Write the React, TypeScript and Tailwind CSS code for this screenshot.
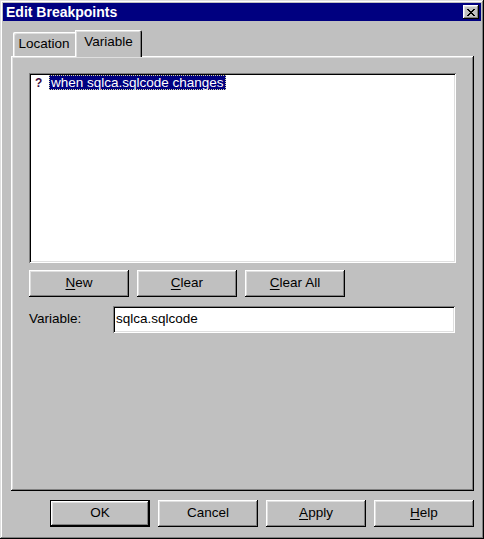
import type { ReactNode } from 'react';

// classic 3D bevels
const raised =
    'shadow-[inset_-1px_-1px_0_#000000,inset_1px_1px_0_#ffffff,inset_-2px_-2px_0_#808080,inset_2px_2px_0_#dfdfdf]';
const sunken =
    'shadow-[inset_1px_1px_0_#808080,inset_-1px_-1px_0_#ffffff,inset_2px_2px_0_#000000,inset_-2px_-2px_0_#dfdfdf]';

// pixel X for the close box
const closeCells = [
    [0, 0], [1, 0], [6, 0], [7, 0],
    [1, 1], [2, 1], [5, 1], [6, 1],
    [2, 2], [3, 2], [4, 2], [5, 2],
    [3, 3], [4, 3],
    [2, 4], [3, 4], [4, 4], [5, 4],
    [1, 5], [2, 5], [5, 5], [6, 5],
    [0, 6], [1, 6], [6, 6], [7, 6],
];

function CloseGlyph() {
    return (
        <svg width="8" height="7" viewBox="0 0 8 7" shapeRendering="crispEdges">
            {closeCells.map(([x, y]) => (
                <rect key={`${x}-${y}`} x={x} y={y} width="1" height="1" fill="#000" />
            ))}
        </svg>
    );
}

function Button({ children, isDefault }: { children: ReactNode; isDefault?: boolean }) {
    if (isDefault) {
        return (
            <div className="w-[100px] h-[27px] border border-black bg-[#c0c0c0]">
                <div className={`w-full h-full flex items-center justify-center ${raised}`}>{children}</div>
            </div>
        );
    }
    return (
        <div className={`w-[100px] h-[27px] flex items-center justify-center bg-[#c0c0c0] ${raised}`}>
            {children}
        </div>
    );
}

function Key({ children }: { children: ReactNode }) {
    return <span className="underline underline-offset-[2px]">{children}</span>;
}

export default function App() {
    return (
        <div
            className="w-[484px] h-[539px] p-[3px] bg-[#c0c0c0] flex flex-col text-black text-[13.5px] shadow-[inset_-1px_-1px_0_#000000,inset_1px_1px_0_#dfdfdf,inset_-2px_-2px_0_#808080,inset_2px_2px_0_#ffffff]"
            style={{ fontFamily: '"Liberation Sans", Arial, sans-serif' }}
        >
            {/* Title bar */}
            <div className="h-[18px] bg-[#000080] flex items-center justify-between pl-[3px] pr-[2px]">
                <span className="text-white font-bold text-[14px] leading-none">Edit Breakpoints</span>
                <div className={`w-[16px] h-[14px] bg-[#c0c0c0] flex items-center justify-center ${raised}`}>
                    <CloseGlyph />
                </div>
            </div>

            <div className="pl-[8px] pt-[9px]">
                {/* Tabs */}
                <div className="flex items-end pl-[2px] h-[26px]">
                    <div className="w-[62px] h-[24px] flex items-center justify-center rounded-tl-[2px] shadow-[inset_1px_1px_0_#ffffff,inset_2px_2px_0_#dfdfdf]">
                        Location
                    </div>
                    <div className="relative z-10 w-[67px] h-[27px] -mb-[1px] pb-[3px] flex items-center justify-center bg-[#c0c0c0] rounded-tr-[2px] shadow-[inset_1px_1px_0_#ffffff,inset_-1px_0_0_#000000,inset_-2px_0_0_#808080,inset_2px_2px_0_#dfdfdf]">
                        Variable
                    </div>
                </div>

                {/* Tab page */}
                <div className={`w-[463px] h-[435px] pt-[17px] pl-[18px] ${raised}`}>
                    <div className={`w-[427px] h-[190px] bg-white p-[2px] ${sunken}`}>
                        <div className="flex items-center pl-[4px] h-[15px]">
                            <span className="w-[14px] text-[#3c0a3c] font-bold text-[12px] leading-none">?</span>
                            <span className="h-[15px] px-[1px] leading-[13px] bg-[#000080] text-white border border-dotted border-[#d8d8a0]">
                                when sqlca.sqlcode changes
                            </span>
                        </div>
                    </div>

                    <div className="flex gap-[8px] mt-[7px]">
                        <Button><Key>N</Key>ew</Button>
                        <Button><Key>C</Key>lear</Button>
                        <Button><Key>C</Key>lear All</Button>
                    </div>

                    <div className="flex items-center mt-[9px]">
                        <span className="w-[84px]">Variable:</span>
                        <div className={`w-[342px] h-[27px] bg-white pl-[3px] flex items-center ${sunken}`}>
                            sqlca.sqlcode
                        </div>
                    </div>
                </div>

                {/* Dialog buttons */}
                <div className="w-[463px] flex justify-end gap-[8px] mt-[9px]">
                    <Button isDefault>OK</Button>
                    <Button>Cancel</Button>
                    <Button><Key>A</Key>pply</Button>
                    <Button><Key>H</Key>elp</Button>
                </div>
            </div>
        </div>
    );
}
